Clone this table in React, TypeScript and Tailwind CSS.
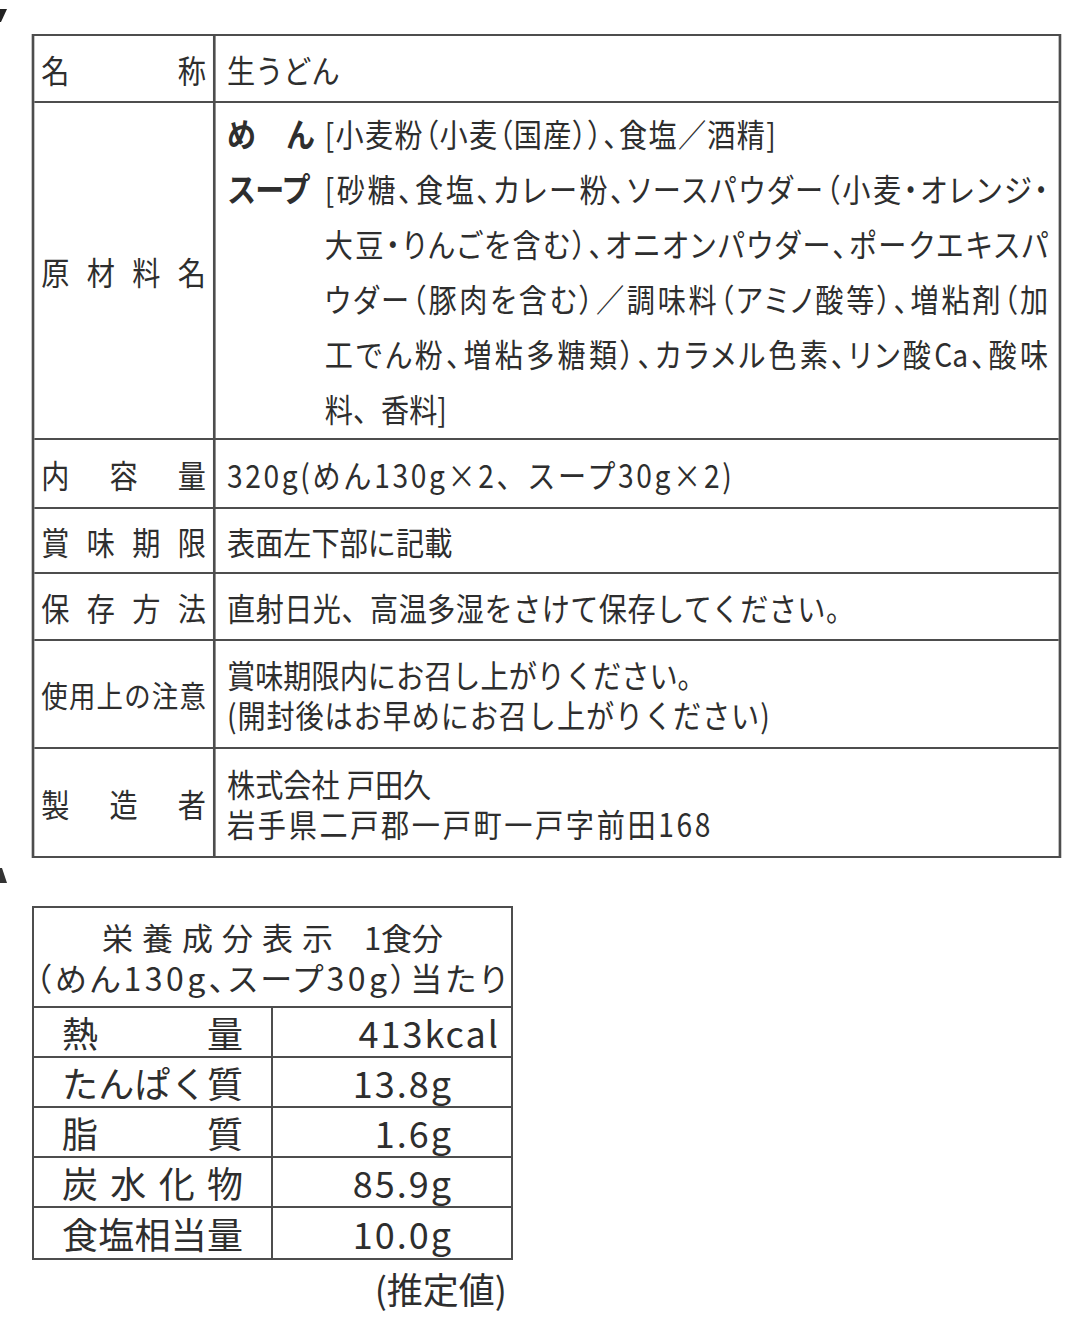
import type { ReactNode } from 'react'

const jp = "font-['Noto_Sans_CJK_JP','Noto_Sans_CJK_SC',sans-serif]"

function Spread({ text, className = '' }: { text: string; className?: string }) {
  return (
    <div className={`flex justify-between ${className}`}>
      {Array.from(text).map((c, i) => (
        <span key={i}>{c}</span>
      ))}
    </div>
  )
}

function Row({
  label,
  h,
  last = false,
  labelSize = 'text-[32px]',
  children,
}: {
  label: string
  h: string
  last?: boolean
  labelSize?: string
  children: ReactNode
}) {
  return (
    <div className={`flex ${h} ${last ? '' : 'border-b-2 border-[#4d4d4d]'}`}>
      <div className={`flex w-[206px] shrink-0 items-center border-r-[3px] border-[#4d4d4d] px-[8px] ${labelSize}`}>
        <Spread text={label} className="w-full" />
      </div>
      <div className="flex min-w-0 flex-1 flex-col justify-center pl-[13px] pr-[12px]">{children}</div>
    </div>
  )
}

const nutrition = [
  { label: '熱量', value: '413kcal', pad: 'pr-[11px]' },
  { label: 'たんぱく質', value: '13.8g', pad: 'pr-[58px]' },
  { label: '脂質', value: '1.6g', pad: 'pr-[58px]' },
  { label: '炭水化物', value: '85.9g', pad: 'pr-[58px]' },
  { label: '食塩相当量', value: '10.0g', pad: 'pr-[58px]' },
]

const fill = "text-justify [text-align-last:justify] [font-feature-settings:'palt']"

export default function App() {
  return (
    <div className={`relative min-h-[1320px] w-full overflow-hidden bg-white text-[#2e2e2e] ${jp}`}>
      {/* cut-off marks at the left edge */}
      <svg className="absolute left-0 top-0" width="10" height="900" viewBox="0 0 10 900">
        <polygon points="0,9 7,9 1,22 0,22" fill="#222" />
        <polygon points="0,868 2,868 7,883 0,883" fill="#333" />
      </svg>

      {/* 一括表示 */}
      <div className="w-[1240px] origin-top-left scale-x-[0.88] pl-[36px] pt-[34px]">
        <div className="w-[1170px] border-x-[3px] border-y-2 border-[#4d4d4d] text-[32px]">
          <Row label="名称" h="h-[67px]">
            <div className="leading-[40px]">生うどん</div>
          </Row>

          <Row label="原材料名" h="h-[337px]">
            <div className="grid grid-cols-[111px_1fr] leading-[55px]">
              <Spread text="めん" className="w-[100px] text-[33px] font-bold" />
              <div className="tracking-[1.5px] [font-feature-settings:'palt']">[小麦粉（小麦（国産））、食塩／酒精]</div>
              <div className="w-[100px] text-[33px] font-bold tracking-[-1px]">スープ</div>
              <div>
                <div className={fill}>[砂糖、食塩、カレー粉、ソースパウダー（小麦・オレンジ・</div>
                <div className={fill}>大豆・りんごを含む）、オニオンパウダー、ポークエキスパ</div>
                <div className={fill}>ウダー（豚肉を含む）／調味料（アミノ酸等）、増粘剤（加</div>
                <div className={fill}>工でん粉、増粘多糖類）、カラメル色素、リン酸Ca、酸味</div>
                <div>料、香料]</div>
              </div>
            </div>
          </Row>

          <Row label="内容量" h="h-[69px]">
            <div className="leading-[40px] tracking-[3px]">320g(めん130g×2、スープ30g×2)</div>
          </Row>

          <Row label="賞味期限" h="h-[65px]">
            <div className="leading-[40px]">表面左下部に記載</div>
          </Row>

          <Row label="保存方法" h="h-[67px]">
            <div className="leading-[40px] tracking-[0.5px]">直射日光、高温多湿をさけて保存してください。</div>
          </Row>

          <Row label="使用上の注意" h="h-[108px]" labelSize="text-[30px]">
            <div className="leading-[40px]">
              <div>賞味期限内にお召し上がりください。</div>
              <div className="tracking-[1px]">(開封後はお早めにお召し上がりください)</div>
            </div>
          </Row>

          <Row label="製造者" h="h-[107px]" last>
            <div className="leading-[40px]">
              <div>
                株式会社<span className="ml-[8px]">戸田久</span>
              </div>
              <div className="tracking-[3px]">岩手県二戸郡一戸町一戸字前田168</div>
            </div>
          </Row>
        </div>
      </div>

      {/* 栄養成分表示 */}
      <div className="ml-[32px] mt-[48px] w-[481px]">
        <div className="border-2 border-[#4d4d4d]">
          <div className="flex h-[100px] flex-col items-center justify-center border-b-2 border-[#4d4d4d] leading-[40px]">
            <div className="text-[31px]">
              <span className="tracking-[9px]">栄養成分表示</span>
              <span className="ml-[22px]">1食分</span>
            </div>
            <div className="text-[32px] tracking-[3.5px] [font-feature-settings:'palt']">（めん130g、スープ30g）当たり</div>
          </div>
          {nutrition.map((n, i) => (
            <div
              key={n.label}
              className={`flex h-[50px] ${i < nutrition.length - 1 ? 'border-b-2 border-[#4d4d4d]' : ''}`}
            >
              <div className="flex w-[239px] shrink-0 items-center border-r-2 border-[#4d4d4d] px-[28px] text-[36px] leading-[40px]">
                <Spread text={n.label} className="w-full" />
              </div>
              <div className={`flex flex-1 items-center justify-end text-[36px] leading-[40px] tracking-[2px] ${n.pad}`}>
                {n.value}
              </div>
            </div>
          ))}
        </div>
        <div className="mt-[8px] pr-[6px] text-right text-[36px] leading-[40px]">(推定値)</div>
      </div>
    </div>
  )
}
